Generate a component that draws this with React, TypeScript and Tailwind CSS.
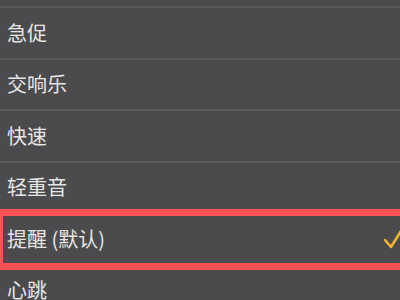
import React from 'react';

const items = ['急促', '交响乐', '快速', '轻重音', '提醒 (默认)', '心跳'];
const selected = '提醒 (默认)';

export default function App() {
  return (
    <div
      className="relative w-[400px] h-[300px] overflow-hidden bg-[#4b4b4d] text-[#e6e6e6]"
      style={{ fontFamily: '"Noto Sans CJK SC", "Noto Sans", sans-serif' }}
    >
      {/* 上一项只露出底边 */}
      <div className="h-[8px] border-b-2 border-[#5b5b5d]" />
      {items.map((item) => (
        <div
          key={item}
          className="h-[51.5px] flex items-center justify-between pl-[7px] border-b-2 border-[#5b5b5d]"
        >
          <span className="text-[20px] leading-none">{item}</span>
          {item === selected && (
            <svg width="20" height="20" viewBox="0 0 20 20" className="shrink-0 -mr-[4px]">
              <polyline
                points="1,11 7,18 17,2"
                fill="none"
                stroke="#f0b631"
                strokeWidth="2.5"
                strokeLinecap="round"
                strokeLinejoin="round"
              />
            </svg>
          )}
        </div>
      ))}
      {/* 红色标注框 */}
      <div className="absolute top-[209px] left-[-4px] right-[-10px] h-[61px] border-[7px] border-[#fb5254]" />
    </div>
  );
}
